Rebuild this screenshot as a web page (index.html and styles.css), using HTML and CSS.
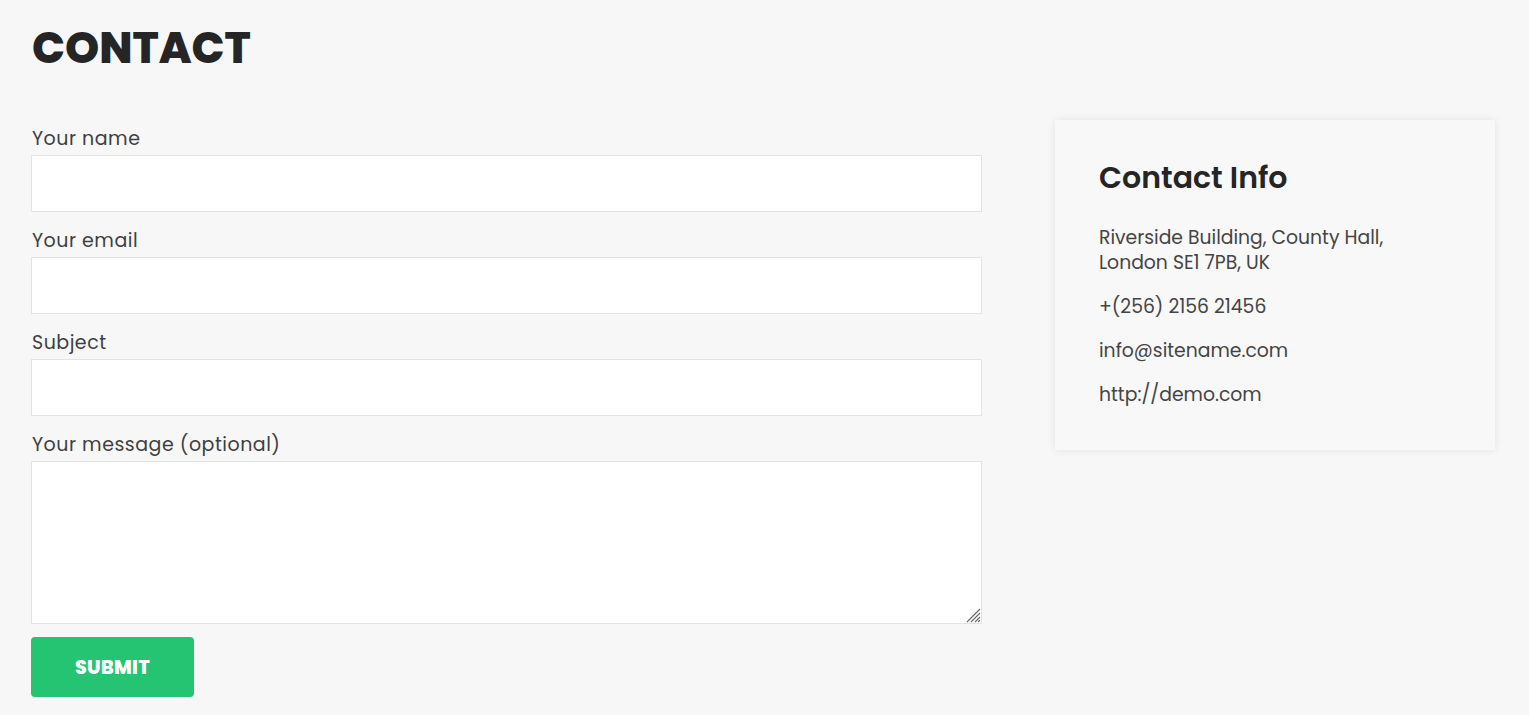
FILE: index.html
```html
<!DOCTYPE html>
<html lang="en">
<head>
<meta charset="utf-8">
<title>Contact</title>
<link rel="stylesheet" href="styles.css">
</head>
<body>
<main class="page">
  <h1 class="title">CONTACT</h1>
  <div class="layout">
    <form class="form">
      <label class="label" for="name">Your name</label>
      <input class="field" id="name" type="text">
      <label class="label" for="email">Your email</label>
      <input class="field" id="email" type="email">
      <label class="label" for="subject">Subject</label>
      <input class="field" id="subject" type="text">
      <label class="label" for="msg">Your message (optional)</label>
      <textarea class="field area" id="msg"></textarea>
      <button class="submit" type="button">SUBMIT</button>
    </form>
    <aside class="card">
      <h2 class="card-title">Contact Info</h2>
      <p class="info">Riverside Building, County Hall,<br>London SE1 7PB, UK</p>
      <p class="info">+(256) 2156 21456</p>
      <p class="info">info@sitename.com</p>
      <p class="info">http://demo.com</p>
    </aside>
  </div>
</main>
</body>
</html>
```
FILE: styles.css
```css
html, body {
  margin: 0;
  background: #f7f7f7;
}
body {
  font-family: "Poppins", "Inter", "Noto Sans", sans-serif;
  color: #444;
}
.page {
  padding: 22px 34px 0 31px;
}
.title {
  margin: 0 0 0 1px;
  font-size: 43.5px;
  line-height: 52px;
  font-weight: 800;
  color: #252525;
}
.layout {
  display: flex;
  align-items: flex-start;
  justify-content: space-between;
  margin-top: 46px;
}
.form {
  width: 951px;
  display: flex;
  flex-direction: column;
}
.label {
  display: block;
  font-size: 19px;
  line-height: 27px;
  color: #3f3f3f;
  margin: 15px 0 3px 1px;
  letter-spacing: 0.5px;
}
.label:first-child {
  margin-top: 5px;
}
.field {
  display: block;
  box-sizing: border-box;
  width: 100%;
  height: 57px;
  margin: 0;
  border: 1px solid #e3e3e3;
  background: #fff;
  font: inherit;
}
.area {
  height: 163px;
  resize: vertical;
}
.area::-webkit-resizer {
  background: url("data:image/svg+xml,%3Csvg xmlns='http://www.w3.org/2000/svg' width='15' height='15' viewBox='0 0 15 15'%3E%3Cg stroke='%23666' stroke-width='1.1'%3E%3Cline x1='1' y1='14' x2='14' y2='1'/%3E%3Cline x1='5' y1='14' x2='14' y2='5'/%3E%3Cline x1='9' y1='14' x2='14' y2='9'/%3E%3Cline x1='12' y1='14' x2='14' y2='12'/%3E%3C/g%3E%3C/svg%3E") no-repeat right bottom;
}
.submit {
  margin-top: 13px;
  width: 163px;
  height: 60px;
  border: 0;
  border-radius: 4px;
  background: #24c473;
  color: #fff;
  font-family: inherit;
  font-weight: 800;
  font-size: 19px;
  letter-spacing: 0.3px;
}
.card {
  box-sizing: border-box;
  width: 440px;
  height: 330px;
  background: #f8f8f8;
  box-shadow: 0 0 8px rgba(0,0,0,0.09);
  padding: 40px 44px;
}
.card-title {
  margin: 0 0 29px;
  font-size: 30px;
  line-height: 36px;
  font-weight: 600;
  color: #252525;
}
.info {
  margin: 0 0 19px;
  font-size: 18.8px;
  line-height: 25px;
  color: #444;
}
```
